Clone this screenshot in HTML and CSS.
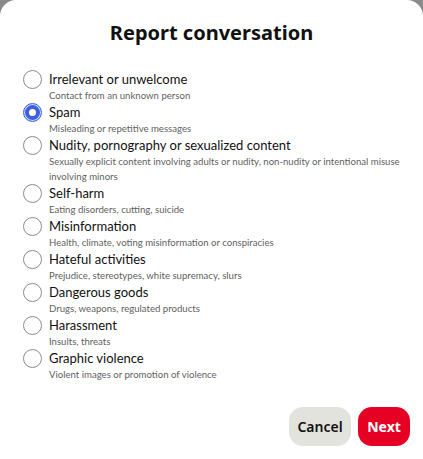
FILE: index.html
```html
<!DOCTYPE html>
<html lang="en">

<head>
  <meta charset="UTF-8" />
  <meta name="viewport" content="width=device-width, initial-scale=1.0" />
  <title>Report conversation</title>
  <link rel="stylesheet" href="styles.css">
</head>

<body>
  <div class="modal">
    <h1 class="modal-title">Report conversation</h1>

    <ul class="reason-list">
      <li class="reason">
        <span class="radio"></span>
        <div class="reason-text">
          <p class="reason-label">Irrelevant or unwelcome</p>
          <p class="reason-desc">Contact from an unknown person</p>
        </div>
      </li>
      <li class="reason">
        <span class="radio checked"></span>
        <div class="reason-text">
          <p class="reason-label">Spam</p>
          <p class="reason-desc">Misleading or repetitive messages</p>
        </div>
      </li>
      <li class="reason">
        <span class="radio"></span>
        <div class="reason-text">
          <p class="reason-label">Nudity, pornography or sexualized content</p>
          <p class="reason-desc">Sexually explicit content involving adults or nudity, non-nudity or intentional misuse involving minors</p>
        </div>
      </li>
      <li class="reason">
        <span class="radio"></span>
        <div class="reason-text">
          <p class="reason-label">Self-harm</p>
          <p class="reason-desc">Eating disorders, cutting, suicide</p>
        </div>
      </li>
      <li class="reason">
        <span class="radio"></span>
        <div class="reason-text">
          <p class="reason-label">Misinformation</p>
          <p class="reason-desc">Health, climate, voting misinformation or conspiracies</p>
        </div>
      </li>
      <li class="reason">
        <span class="radio"></span>
        <div class="reason-text">
          <p class="reason-label">Hateful activities</p>
          <p class="reason-desc">Prejudice, stereotypes, white supremacy, slurs</p>
        </div>
      </li>
      <li class="reason">
        <span class="radio"></span>
        <div class="reason-text">
          <p class="reason-label">Dangerous goods</p>
          <p class="reason-desc">Drugs, weapons, regulated products</p>
        </div>
      </li>
      <li class="reason">
        <span class="radio"></span>
        <div class="reason-text">
          <p class="reason-label">Harassment</p>
          <p class="reason-desc">Insults, threats</p>
        </div>
      </li>
      <li class="reason">
        <span class="radio"></span>
        <div class="reason-text">
          <p class="reason-label">Graphic violence</p>
          <p class="reason-desc">Violent images or promotion of violence</p>
        </div>
      </li>
    </ul>

    <div class="modal-footer">
      <button class="btn btn-cancel">Cancel</button>
      <button class="btn btn-next">Next</button>
    </div>
  </div>
</body>

</html>
```

FILE: styles.css
```css
* {
  box-sizing: border-box;
}

body {
  margin: 0;
  height: 459px;
  overflow: hidden;
  background: #8a8a8a;
  font-family: "Noto Sans", "Open Sans", Arial, sans-serif;
  color: #111;
}

.modal {
  height: 476px;
  background: #fff;
  border-radius: 16px;
  padding-top: 19px;
}

.modal-title {
  margin: 0;
  font-size: 20px;
  line-height: 28px;
  font-weight: 700;
  text-align: center;
}

.reason-list {
  margin: 23px 0 0 0;
  padding: 0 12px 0 23px;
  list-style: none;
}

.reason {
  display: flex;
  align-items: flex-start;
  gap: 7px;
}

.radio {
  flex: none;
  width: 19px;
  height: 19px;
  border: 1px solid #8c8c8c;
  border-radius: 50%;
  background: #fff;
}

/* 选中: 外圈蓝, 细白线, 粗蓝环, 白心 */
.radio.checked {
  border: 1.5px solid #3d5fe0;
  box-shadow: inset 0 0 0 1px #dfe5fb, inset 0 0 0 5px #3d5fe0;
}

.reason-text {
  font-family: Lato, "Noto Sans", Arial, sans-serif;
}

.reason-label {
  margin: 0;
  font-size: 13px;
  line-height: 18px;
}

.reason-desc {
  margin: 0;
  font-size: 9.6px;
  line-height: 15px;
  color: #5f5f5f;
}

.modal-footer {
  display: flex;
  justify-content: flex-end;
  gap: 7px;
  padding: 25px 13px 0 0;
}

.btn {
  appearance: none;
  border: none;
  height: 39px;
  border-radius: 14px;
  font-family: inherit;
  font-size: 14px;
  font-weight: 600;
  cursor: pointer;
}

.btn-cancel {
  width: 62px;
  background: #e3e3de;
  color: #111;
}

.btn-next {
  width: 52px;
  background: #e60023;
  color: #fff;
  font-weight: 700;
}
```
